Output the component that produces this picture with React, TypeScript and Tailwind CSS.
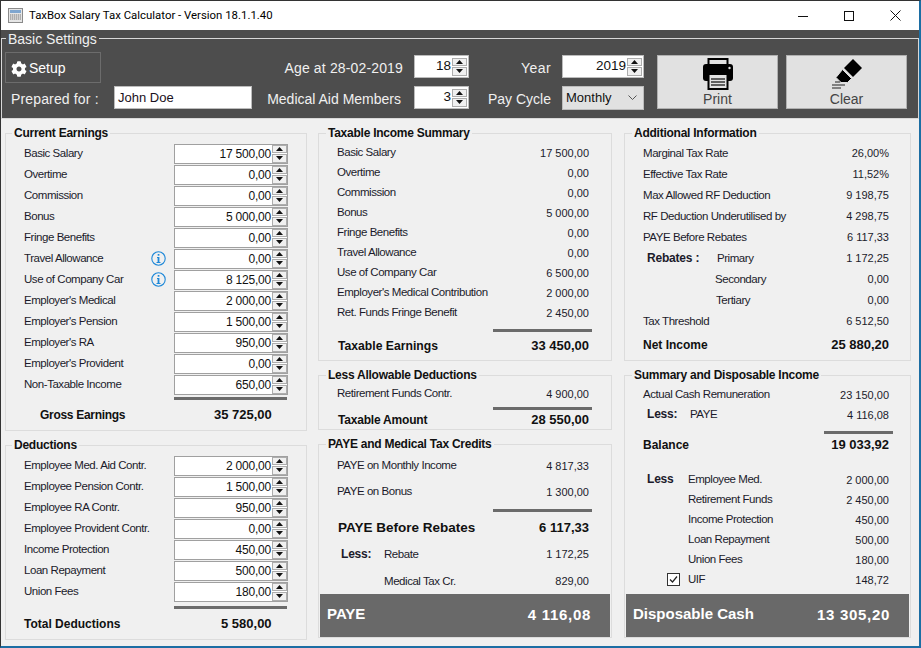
import { FaCog } from "react-icons/fa";

const SANS = "font-['Liberation_Sans',Arial,sans-serif]";
const LABEL = "text-[11.5px] tracking-[-0.45px]";

function SpinButtons() {
  return (
    <div className="flex h-[18px] w-[15px] shrink-0 flex-col gap-px">
      <div className="flex flex-1 items-center justify-center border border-[#adadad] bg-[#f0f0f0]">
        <svg width="7" height="4" viewBox="0 0 7 4">
          <path d="M3.5 0 7 4H0z" fill="#111" />
        </svg>
      </div>
      <div className="flex flex-1 items-center justify-center border border-[#adadad] bg-[#f0f0f0]">
        <svg width="7" height="4" viewBox="0 0 7 4">
          <path d="M0 0h7L3.5 4z" fill="#111" />
        </svg>
      </div>
    </div>
  );
}

function NumberBox({ value }: { value: string }) {
  return (
    <div className="flex h-[20px] w-[114px] items-center border border-[#a0a0a0] bg-white pl-1">
      <span className="flex-1 text-right text-[12px] leading-none tracking-[-0.2px] text-[#111]">{value}</span>
      <div className="ml-px">
        <SpinButtons />
      </div>
    </div>
  );
}

function InfoIcon() {
  return (
    <svg width="15" height="15" viewBox="0 0 15 15" className="shrink-0">
      <circle cx="7.5" cy="7.5" r="6.7" fill="none" stroke="#1e88d8" strokeWidth="1.1" />
      <rect x="6.7" y="3" width="1.7" height="1.7" fill="#1e88d8" />
      <path d="M6 6h2.4v5H9.5v1h-4v-1h1.1V7H6z" fill="#1e88d8" />
    </svg>
  );
}

function GroupBox({
  title,
  className,
  children,
}: {
  title: string;
  className: string;
  children: React.ReactNode;
}) {
  return (
    <fieldset className={`min-w-0 border border-[#dcdcdc] px-0 pb-0 pt-0 ${className}`}>
      <legend className="ml-[7px] px-[2px] text-[12px] font-bold leading-[14px] tracking-[-0.25px] text-[#111]">
        {title}
      </legend>
      {children}
    </fieldset>
  );
}

function InputRow({ label, value, info }: { label: string; value: string; info?: boolean }) {
  return (
    <div className="flex h-[21px] items-center pl-[18px] text-[#1b1b2b]">
      <span className={`w-[126px] shrink-0 whitespace-nowrap ${LABEL}`}>{label}</span>
      <div className="flex w-[24px] shrink-0 pl-px">{info ? <InfoIcon /> : null}</div>
      <NumberBox value={value} />
    </div>
  );
}

function Rule({ className }: { className: string }) {
  return <div className={`h-[3px] bg-[#6b6b6b] ${className}`} />;
}

function ValueRow({
  label,
  value,
  h = 20,
  bold,
  boldClass = "text-[12px]",
  prefix,
  prefixW = 43,
  indent = 0,
}: {
  label: string;
  value: string;
  h?: number;
  bold?: boolean;
  boldClass?: string;
  prefix?: string;
  prefixW?: number;
  indent?: number;
}) {
  return (
    <div
      className={`flex items-center text-[#1b1b2b] ${bold ? "font-bold text-[#111]" : ""}`}
      style={{ height: h, paddingLeft: indent }}
    >
      {prefix ? (
        <span className="shrink-0 whitespace-nowrap text-[12px] font-bold tracking-[-0.2px]" style={{ width: prefixW }}>
          {prefix}
        </span>
      ) : null}
      <span className={`flex-1 whitespace-nowrap ${bold ? boldClass : `translate-y-[1px] ${LABEL}`}`}>{label}</span>
      <span className={`whitespace-nowrap ${bold ? "text-[13px]" : "translate-y-[1px] text-[11px]"}`}>{value}</span>
    </div>
  );
}

function TotalBar({ label, value }: { label: string; value: string }) {
  return (
    <div className="mx-[1px] flex h-[43px] items-center justify-between bg-[#696969] pl-[7px] pr-[19px] font-bold text-white">
      <span className="-translate-y-[1px] text-[15px]">{label}</span>
      <span className="text-[15px] tracking-[0.7px]">{value}</span>
    </div>
  );
}

const earnings: [string, string, boolean?][] = [
  ["Basic Salary", "17 500,00"],
  ["Overtime", "0,00"],
  ["Commission", "0,00"],
  ["Bonus", "5 000,00"],
  ["Fringe Benefits", "0,00"],
  ["Travel Allowance", "0,00", true],
  ["Use of Company Car", "8 125,00", true],
  ["Employer's Medical", "2 000,00"],
  ["Employer's Pension", "1 500,00"],
  ["Employer's RA", "950,00"],
  ["Employer's Provident", "0,00"],
  ["Non-Taxable Income", "650,00"],
];

const deductions: [string, string][] = [
  ["Employee Med. Aid Contr.", "2 000,00"],
  ["Employee Pension Contr.", "1 500,00"],
  ["Employee RA Contr.", "950,00"],
  ["Employee Provident Contr.", "0,00"],
  ["Income Protection", "450,00"],
  ["Loan Repayment", "500,00"],
  ["Union Fees", "180,00"],
];

const taxable: [string, string][] = [
  ["Basic Salary", "17 500,00"],
  ["Overtime", "0,00"],
  ["Commission", "0,00"],
  ["Bonus", "5 000,00"],
  ["Fringe Benefits", "0,00"],
  ["Travel Allowance", "0,00"],
  ["Use of Company Car", "6 500,00"],
  ["Employer's Medical Contribution", "2 000,00"],
  ["Ret. Funds Fringe Benefit", "2 450,00"],
];

const additional: [string, string][] = [
  ["Marginal Tax Rate", "26,00%"],
  ["Effective Tax Rate", "11,52%"],
  ["Max Allowed RF Deduction", "9 198,75"],
  ["RF Deduction Underutilised by", "4 298,75"],
  ["PAYE Before Rebates", "6 117,33"],
];

const lessItems: [string, string][] = [
  ["Retirement Funds", "2 450,00"],
  ["Income Protection", "450,00"],
  ["Loan Repayment", "500,00"],
  ["Union Fees", "180,00"],
];

export default function App() {
  return (
    <div className={`flex h-[648px] w-[921px] flex-col overflow-hidden border-l border-t border-l-[#333] border-t-[#333] border-r-2 border-r-[#1c6ea4] border-b-2 border-b-[#1c6ea4] bg-[#f0f0f0] ${SANS}`}>
      {/* title bar */}
      <div className="flex h-[29px] shrink-0 items-center bg-white pl-[7px] font-['Roboto',sans-serif] text-[11.4px] text-black">
        <svg width="15" height="15" viewBox="0 0 15 15" className="mr-[6px]">
          <rect x="0.5" y="0.5" width="14" height="14" fill="#e6e6e6" stroke="#8a8a8a" />
          <rect x="2" y="2" width="11" height="3" fill="#7fa6cf" />
          <path d="M2 7h11M2 9h11M2 11h11" stroke="#777" strokeWidth="1" strokeDasharray="1.4 0.6" />
        </svg>
        <span>TaxBox Salary Tax Calculator - Version 18.1.1.40</span>
        <div className="ml-auto flex h-full items-center pr-px">
          <div className="flex w-[46px] justify-center">
            <svg width="10" height="10" viewBox="0 0 10 10"><path d="M0 5.5h10" stroke="#111" /></svg>
          </div>
          <div className="flex w-[46px] justify-center">
            <svg width="10" height="10" viewBox="0 0 10 10"><rect x="0.5" y="0.5" width="9" height="9" fill="none" stroke="#111" /></svg>
          </div>
          <div className="flex w-[46px] justify-center">
            <svg width="11" height="11" viewBox="0 0 11 11"><path d="M0.5 0.5l10 10M10.5 0.5l-10 10" stroke="#111" /></svg>
          </div>
        </div>
      </div>

      {/* basic settings */}
      <div className="h-[89px] shrink-0 bg-[#4d4d4d]">
        <fieldset className="h-[89px] min-w-0 border border-[#d8d8d8] pr-[3px]">
          <legend className="ml-[4px] px-[2px] text-[14px] leading-[16px] text-[#f0f0f0]">
            <span className="inline-block translate-y-[1px]">Basic Settings</span>
          </legend>
          <div className="flex h-[72px]">
            <div className="flex w-[252px] shrink-0 flex-col pl-[3px] pt-[6px]">
              <div className="flex h-[31px] w-[96px] items-center gap-[2px] border border-[#6c6c6c] pl-[5px] pt-[2px] text-[14px] text-white">
                <FaCog className="text-[16px]" />
                <span>Setup</span>
              </div>
              <div className="mt-[3px] flex items-center">
                <span className="w-[109px] translate-y-[2px] pl-[6px] text-[14px] tracking-[0.15px] text-[#f0f0f0]">Prepared for :</span>
                <div className="flex h-[23px] w-[138px] items-center border border-[#bcbcbc] bg-white pl-[3px] text-[13px] text-[#1a1020]">
                  John Doe
                </div>
              </div>
            </div>
            <div className="flex w-[215px] shrink-0 flex-col items-end pt-[9px] text-[14px] text-[#f0f0f0]">
              <div className="flex h-[23px] items-center gap-[11px]">
                <span className="translate-y-[2px] tracking-[0.15px]">Age at 28-02-2019</span>
                <div className="flex h-[23px] w-[55px] items-center justify-end border border-[#bcbcbc] bg-white pr-[1px] text-[#111]">
                  <span className="mr-[1px] text-[13.5px]">18</span>
                  <SpinButtons />
                </div>
              </div>
              <div className="mt-[8px] flex h-[23px] items-center gap-[13px]">
                <span className="translate-y-[2px]">Medical Aid Members</span>
                <div className="flex h-[23px] w-[55px] items-center justify-end border border-[#bcbcbc] bg-white pr-[1px] text-[#111]">
                  <span className="mr-[1px] text-[13.5px]">3</span>
                  <SpinButtons />
                </div>
              </div>
            </div>
            <div className="flex w-[175px] shrink-0 flex-col items-end pt-[9px] text-[14px] text-[#f0f0f0]">
              <div className="flex h-[23px] items-center gap-[11px]">
                <span className="translate-y-[2px] tracking-[0.4px]">Year</span>
                <div className="flex h-[23px] w-[82px] items-center justify-end border border-[#bcbcbc] bg-white pr-[1px] text-[#111]">
                  <span className="mr-[1px] text-[13.5px]">2019</span>
                  <SpinButtons />
                </div>
              </div>
              <div className="mt-[8px] flex h-[23px] items-center gap-[11px]">
                <span className="translate-y-[2px]">Pay Cycle</span>
                <div className="flex h-[24px] w-[82px] items-center justify-between border border-[#bcbcbc] bg-[#e1e1e1] pl-[3px] pr-[6px] text-[13px] text-[#111]">
                  <span>Monthly</span>
                  <svg width="9" height="5" viewBox="0 0 9 5">
                    <path d="M0.5 0.5l4 4 4-4" fill="none" stroke="#555" />
                  </svg>
                </div>
              </div>
            </div>
            <div className="ml-[13px] mt-[9px] flex h-[54px] w-[121px] shrink-0 flex-col items-center border border-[#b0b0b0] bg-[#e1e1e1]">
              <svg width="30" height="32" viewBox="0 0 30 32" className="mt-[2px]">
                <rect x="5.5" y="1" width="19" height="8" fill="none" stroke="#000" strokeWidth="2" />
                <path d="M3 6h24a3 3 0 0 1 3 3v11a3 3 0 0 1-3 3H3a3 3 0 0 1-3-3V9a3 3 0 0 1 3-3z" fill="#000" />
                <rect x="5.5" y="16" width="19" height="15" fill="#e1e1e1" stroke="#000" strokeWidth="2" />
                <path d="M8 21h14M8 24h14M8 27h14" stroke="#333" strokeWidth="1.4" />
                <circle cx="26.5" cy="10" r="1.2" fill="#e1e1e1" />
              </svg>
              <span className="mt-[1px] text-[14px] leading-[16px] text-[#444]">Print</span>
            </div>
            <div className="ml-[8px] mt-[9px] flex h-[54px] w-[121px] shrink-0 flex-col items-center border border-[#b0b0b0] bg-[#e1e1e1]">
              <svg width="32" height="32" viewBox="0 0 32 32" className="mt-[2px]">
                <path d="M22 1l9 9-9 9-9-9z" fill="#000" />
                <path d="M11.5 11.5l9 9-4 4H10l-5-5z" fill="#000" stroke="#e1e1e1" strokeWidth="1" />
                <path d="M1 27h13M1 30h9M4 24h5" stroke="#222" strokeWidth="1.2" />
              </svg>
              <span className="mt-[1px] text-[14px] leading-[16px] text-[#444]">Clear</span>
            </div>
          </div>
        </fieldset>
      </div>

      {/* main panel */}
      <div className="mt-[7px] flex flex-1 pl-[4px]">
        {/* left column */}
        <div className="flex w-[302px] shrink-0 flex-col [&_legend]:ml-[6px]">
          <GroupBox title="Current Earnings" className="h-[305px]">
            <div className="pt-[3px]">
              {earnings.map(([label, value, info]) => (
                <InputRow key={label} label={label} value={value} info={info} />
              ))}
            </div>
            <Rule className="ml-[168px] mt-[2px] w-[113px]" />
            <div className="mt-[5px] flex h-[20px] items-center pl-[34px] text-[12px] font-bold text-[#111]">
              <span className="w-[174px] tracking-[-0.3px]">Gross Earnings</span>
              <span className="text-[13px]">35 725,00</span>
            </div>
          </GroupBox>
          <GroupBox title="Deductions" className="mt-[7px] h-[202px]">
            <div className="pt-[3px]">
              {deductions.map(([label, value]) => (
                <InputRow key={label} label={label} value={value} />
              ))}
            </div>
            <Rule className="ml-[168px] mt-[4px] w-[113px]" />
            <div className="mt-[5px] flex h-[20px] items-center pl-[18px] text-[12px] font-bold text-[#111]">
              <span className="w-[197px]">Total Deductions</span>
              <span className="text-[13px]">5 580,00</span>
            </div>
          </GroupBox>
        </div>

        {/* middle column */}
        <div className="ml-[11px] flex w-[294px] shrink-0 flex-col">
          <GroupBox title="Taxable Income Summary" className="h-[235px]">
            <div className="pl-[18px] pr-[22px] pt-[2px]">
              {taxable.map(([label, value]) => (
                <ValueRow key={label} label={label} value={value} />
              ))}
            </div>
            <Rule className="ml-[174px] mt-[7px] w-[99px]" />
            <div className="pl-[19px] pr-[22px] pt-[4px]">
              <ValueRow label="Taxable Earnings" value="33 450,00" bold boldClass="text-[12.2px]" />
            </div>
          </GroupBox>
          <GroupBox title="Less Allowable Deductions" className="mt-[7px] h-[62px]">
            <div className="pl-[18px] pr-[22px] pt-[1px]">
              <ValueRow label="Retirement Funds Contr." value="4 900,00" />
            </div>
            <Rule className="ml-[174px] mt-[4px] w-[99px]" />
            <div className="pl-[19px] pr-[22px] pt-[1px]">
              <ValueRow label="Taxable Amount" value="28 550,00" bold h={18} boldClass="text-[12px] tracking-[-0.2px]" />
            </div>
          </GroupBox>
          <GroupBox title="PAYE and Medical Tax Credits" className="mt-[7px] h-[201px]">
            <div className="pl-[18px] pr-[22px] pt-[1px]">
              <ValueRow label="PAYE on Monthly Income" value="4 817,33" h={26} />
              <ValueRow label="PAYE on Bonus" value="1 300,00" h={26} />
            </div>
            <Rule className="ml-[174px] mt-[5px] w-[99px]" />
            <div className="pl-[19px] pr-[22px] pt-[4px]">
              <ValueRow label="PAYE Before Rebates" value="6 117,33" bold h={24} boldClass="text-[13.5px]" />
            </div>
            <div className="pl-[22px] pr-[22px]">
              <ValueRow prefix="Less:" label="Rebate" value="1 172,25" h={27} />
              <ValueRow label="Medical Tax Cr." value="829,00" h={27} indent={43} />
            </div>
            <TotalBar label="PAYE" value="4 116,08" />
          </GroupBox>
        </div>

        {/* right column */}
        <div className="ml-[12px] flex w-[287px] shrink-0 flex-col">
          <GroupBox title="Additional Information" className="h-[235px]">
            <div className="pl-[18px] pr-[21px] pt-[2px]">
              {additional.map(([label, value]) => (
                <ValueRow key={label} label={label} value={value} h={21} />
              ))}
              <ValueRow prefix="Rebates :" prefixW={70} label="Primary" value="1 172,25" h={21} indent={4} />
              <ValueRow label="Secondary" value="0,00" h={21} indent={72} />
              <ValueRow label="Tertiary" value="0,00" h={21} indent={73} />
              <ValueRow label="Tax Threshold" value="6 512,50" h={21} />
              <div className="h-[3px]" />
              <ValueRow label="Net Income" value="25 880,20" bold h={21} />
            </div>
          </GroupBox>
          <GroupBox title="Summary and Disposable Income" className="mt-[7px] h-[270px]">
            <div className="pl-[18px] pr-[21px] pt-[2px]">
              <ValueRow label="Actual Cash Remuneration" value="23 150,00" />
              <ValueRow prefix="Less:" label="PAYE" value="4 116,08" indent={4} />
            </div>
            <Rule className="ml-[199px] mt-[7px] w-[69px]" />
            <div className="pl-[18px] pr-[21px] pt-[1px]">
              <ValueRow label="Balance" value="19 033,92" bold h={20} />
              <div className="h-[14px]" />
              <ValueRow prefix="Less" prefixW={41} label="Employee Med." value="2 000,00" indent={4} />
              {lessItems.map(([label, value]) => (
                <ValueRow key={label} label={label} value={value} indent={45} />
              ))}
              <div className="flex h-[20px] items-center text-[#1b1b2b]">
                <div className="ml-[24px] mr-[8px] flex h-[13px] w-[13px] items-center justify-center border border-[#333] bg-white">
                  <svg width="9" height="9" viewBox="0 0 9 9">
                    <path d="M1 4.5l2.5 2.5L8 1.5" fill="none" stroke="#222" strokeWidth="1.2" />
                  </svg>
                </div>
                <span className={`flex-1 translate-y-[1px] ${LABEL}`}>UIF</span>
                <span className="translate-y-[1px] text-[11px]">148,72</span>
              </div>
            </div>
            <div className="mt-[5px]">
              <TotalBar label="Disposable Cash" value="13 305,20" />
            </div>
          </GroupBox>
        </div>
      </div>
    </div>
  );
}
